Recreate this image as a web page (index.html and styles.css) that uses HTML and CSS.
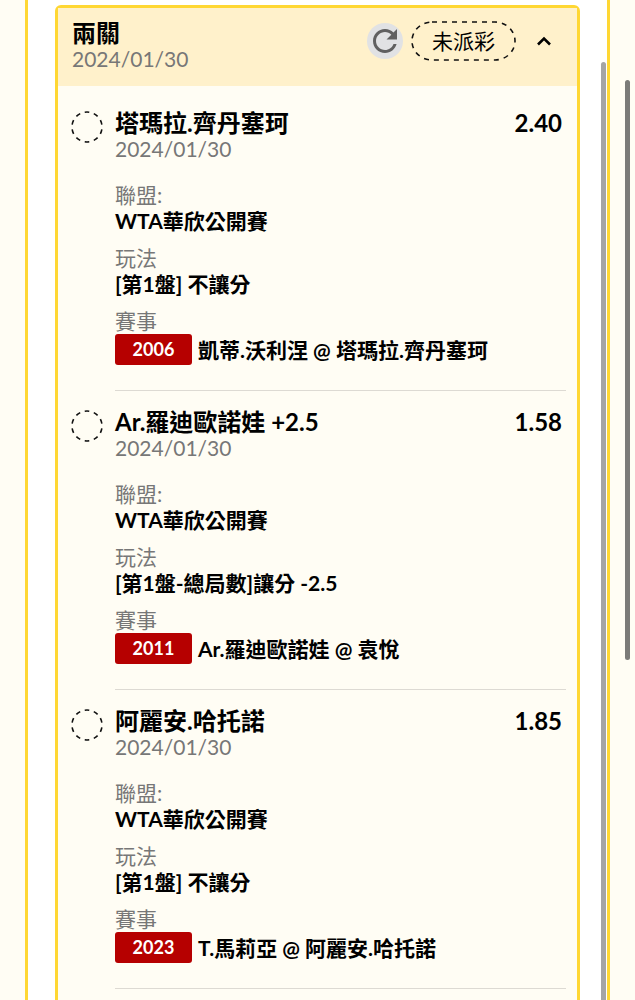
FILE: index.html
```html
<!DOCTYPE html>
<html lang="zh-Hant">
<head>
    <meta charset="UTF-8">
    <meta name="viewport" content="width=device-width, initial-scale=1.0">
    <title>投注紀錄</title>
    <link rel="stylesheet" href="styles.css">
</head>
<body>
    <main class="panel">
        <section class="ticket">
            <header class="ticket-header">
                <div class="ticket-title">
                    <h1>兩關</h1>
                    <time class="date" datetime="2024-01-30">2024/01/30</time>
                </div>
                <div class="ticket-actions">
                    <button class="refresh" type="button" aria-label="重新整理">
                        <svg viewBox="0 0 24 24" width="36" height="36">
                            <path fill="#606060" d="M17.65 6.35C16.2 4.9 14.21 4 12 4c-4.42 0-7.99 3.58-7.99 8s3.57 8 7.99 8c3.73 0 6.84-2.55 7.73-6h-2.08c-.82 2.33-3.04 4-5.65 4-3.31 0-6-2.69-6-6s2.69-6 6-6c1.66 0 3.14.69 4.22 1.78L13 11h7V4l-2.35 2.35z"/>
                        </svg>
                    </button>
                    <span class="status">
                        <svg class="status-line"><rect x="1" y="1" rx="20" ry="20"/></svg>
                        未派彩
                    </span>
                    <button class="toggle" type="button" aria-label="收合">
                        <svg viewBox="0 0 16 10" width="16" height="10">
                            <path d="M2 8.5 L8 2.5 L14 8.5" fill="none" stroke="#000" stroke-width="2.6"/>
                        </svg>
                    </button>
                </div>
            </header>

            <ul class="bets">
                <li class="bet">
                    <svg class="pending" viewBox="0 0 32 32"><circle cx="16" cy="16" r="15" pathLength="100"/></svg>
                    <div class="bet-body">
                        <div class="bet-head">
                            <h2>塔瑪拉.齊丹塞珂</h2>
                            <span class="odds">2.40</span>
                        </div>
                        <time class="date" datetime="2024-01-30">2024/01/30</time>
                        <dl class="details">
                            <div><dt>聯盟:</dt><dd>WTA華欣公開賽</dd></div>
                            <div><dt>玩法</dt><dd>[第1盤] 不讓分</dd></div>
                            <div><dt>賽事</dt><dd class="match"><span class="match-no">2006</span>凱蒂.沃利涅 @ 塔瑪拉.齊丹塞珂</dd></div>
                        </dl>
                    </div>
                </li>
                <li class="bet">
                    <svg class="pending" viewBox="0 0 32 32"><circle cx="16" cy="16" r="15" pathLength="100"/></svg>
                    <div class="bet-body">
                        <div class="bet-head">
                            <h2>Ar.羅迪歐諾娃 +2.5</h2>
                            <span class="odds">1.58</span>
                        </div>
                        <time class="date" datetime="2024-01-30">2024/01/30</time>
                        <dl class="details">
                            <div><dt>聯盟:</dt><dd>WTA華欣公開賽</dd></div>
                            <div><dt>玩法</dt><dd>[第1盤-總局數]讓分 -2.5</dd></div>
                            <div><dt>賽事</dt><dd class="match"><span class="match-no">2011</span>Ar.羅迪歐諾娃 @ 袁悅</dd></div>
                        </dl>
                    </div>
                </li>
                <li class="bet">
                    <svg class="pending" viewBox="0 0 32 32"><circle cx="16" cy="16" r="15" pathLength="100"/></svg>
                    <div class="bet-body">
                        <div class="bet-head">
                            <h2>阿麗安.哈托諾</h2>
                            <span class="odds">1.85</span>
                        </div>
                        <time class="date" datetime="2024-01-30">2024/01/30</time>
                        <dl class="details">
                            <div><dt>聯盟:</dt><dd>WTA華欣公開賽</dd></div>
                            <div><dt>玩法</dt><dd>[第1盤] 不讓分</dd></div>
                            <div><dt>賽事</dt><dd class="match"><span class="match-no">2023</span>T.馬莉亞 @ 阿麗安.哈托諾</dd></div>
                        </dl>
                    </div>
                </li>
            </ul>
        </section>
        <div class="scroll-inner"></div>
    </main>
    <div class="scroll-outer"></div>
</body>
</html>
```

FILE: styles.css
```css
* {
    box-sizing: border-box;
    margin: 0;
    padding: 0;
}
body {
    position: relative;
    height: 100vh;
    overflow: hidden;
    background-color: #fffdf4;
    color: #000;
    font-family: Lato, "Noto Sans CJK TC", sans-serif;
    font-size: 21px;
    line-height: 26px;
}
.panel {
    position: relative;
    min-height: 100vh;
    margin: 0 25px;
    padding: 5px 27px 0;
    background-color: #fff;
    border: solid #ffd733;
    border-width: 0 3px;
}
.ticket {
    background-color: #fffdf4;
    border: 3px solid #ffd733;
    border-radius: 6px;
    padding-bottom: 40px;
}
.ticket-header {
    display: flex;
    justify-content: space-between;
    height: 78px;
    padding: 12px 25px 0 14px;
    background-color: #fff1cb;
}
h1,
h2,
.odds {
    font-size: 24px;
    font-weight: 700;
    line-height: 26px;
}
.date {
    display: block;
    color: #777;
    font-size: 21px;
}
.ticket-actions {
    display: flex;
    align-items: center;
    height: 42px;
}
button {
    border: none;
    background: none;
    cursor: pointer;
}
.refresh {
    width: 36px;
    height: 36px;
    border-radius: 50%;
    background-color: #e1e2e4;
}
.refresh svg,
.toggle svg {
    display: block;
}
.status {
    position: relative;
    margin: 0 20px 0 8px;
    padding: 7px 21px;
}
/* dashed outline laid over the label */
.status-line {
    position: absolute;
    inset: 0;
    width: 100%;
    height: 100%;
}
.status-line rect {
    width: calc(100% - 2px);
    height: calc(100% - 2px);
}
.status-line rect,
.pending circle {
    fill: none;
    stroke: #111;
    stroke-width: 1.6;
    stroke-dasharray: 5;
}
.pending circle {
    stroke-dashoffset: -2.5;
}
.bets {
    padding: 6px 11px 0 13px;
    list-style: none;
}
.bet {
    display: flex;
    gap: 12px;
}
.pending {
    flex: none;
    width: 32px;
    height: 32px;
    margin-top: 19px;
}
.bet-body {
    flex: 1;
    padding: 18px 0 25px;
    border-bottom: 1px solid #dddad3;
}
.bet-head {
    display: flex;
    justify-content: space-between;
    padding-right: 4px;
}
.details {
    display: grid;
    gap: 11px;
    margin-top: 20px;
}
dt {
    color: #777;
}
dd {
    font-weight: 700;
}
.match {
    display: flex;
    align-items: center;
    gap: 6px;
}
.match-no {
    width: 77px;
    border-radius: 3px;
    background-color: #b60000;
    color: #fff;
    font-size: 18px;
    line-height: 31px;
    text-align: center;
}
.scroll-inner,
.scroll-outer {
    position: absolute;
    width: 5px;
    border-radius: 3px;
}
.scroll-inner {
    top: 62px;
    right: 1px;
    bottom: -10px;
    background-color: #a5a5a5;
}
.scroll-outer {
    top: 80px;
    right: 5px;
    height: 58%;
    background-color: #7b7b78;
}
```
